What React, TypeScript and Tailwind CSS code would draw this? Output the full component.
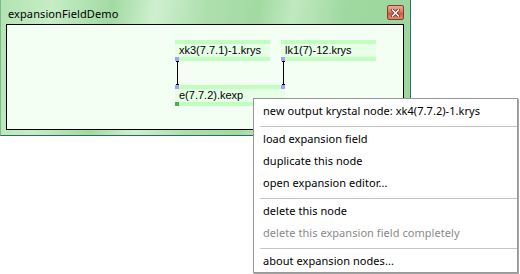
import React from "react";

const uiFont = { fontFamily: '"Noto Sans", "Open Sans", sans-serif' };
const nodeFont = { fontFamily: '"Liberation Sans", Arial, sans-serif' };

function Node({
  left,
  top,
  width,
  label,
  topHandles,
  bottomHandle,
}: {
  left: number;
  top: number;
  width: number;
  label: string;
  topHandles?: boolean;
  bottomHandle: "purple" | "green";
}) {
  return (
    <div className="absolute flex flex-col" style={{ left, top, width }}>
      <div className="relative h-[4px] bg-[#c0ffc0]">
        {topHandles && (
          <>
            <div className="absolute left-0 top-0 h-[4px] w-[4px] bg-[#a8a0f8]" />
            <div className="absolute right-0 top-0 h-[4px] w-[4px] bg-[#a8a0f8]" />
          </>
        )}
      </div>
      <div
        className="flex h-[13px] items-center bg-[#e6ffe6] pl-[4px] text-[11px] leading-[13px] text-black"
        style={nodeFont}
      >
        {label}
      </div>
      <div className="relative h-[4px] bg-[#c0ffc0]">
        <div
          className={
            bottomHandle === "purple"
              ? "absolute left-0 top-0 h-[4px] w-[4px] bg-[#a8a0f8]"
              : "absolute left-0 top-0 h-[4px] w-[4px] bg-[#4fae4f]"
          }
        />
      </div>
    </div>
  );
}

function MenuItem({ label, disabled }: { label: string; disabled?: boolean }) {
  return (
    <div
      className={
        disabled
          ? "flex h-[22px] items-center pl-[9px] text-[11px] tracking-[0.05px] text-[#8a8a8a]"
          : "flex h-[22px] items-center pl-[9px] text-[11px] tracking-[0.05px] text-black"
      }
    >
      {label}
    </div>
  );
}

function Separator() {
  return (
    <div className="flex h-[6px] flex-col pl-[6px] pt-[4px]">
      <div className="h-[1px] bg-[#c5c5c5]" />
    </div>
  );
}

export default function App() {
  return (
    <div className="relative h-[274px] w-[520px] overflow-hidden bg-white" style={uiFont}>
      {/* Window */}
      <div className="flex h-[136px] w-[411px] flex-col border-b border-l border-r border-b-[#2d6b5e] border-l-[#7fb88f] border-r-[#2f6f78] bg-[linear-gradient(100deg,#b2e3b2_0%,#c6edc6_12%,#a2daa2_26%,#cff0cf_36%,#addfad_48%,#a2daa2_60%,#c0e9c0_68%,#a0d9a0_80%,#9cd69c_100%)]">
        {/* Title bar */}
        <div className="flex h-[24px] items-center justify-between pl-[7px] pr-[6px]">
          <span className="pt-[2px] text-[11px] tracking-[0.1px] leading-none text-black">expansionFieldDemo</span>
          <div className="mt-[1px] flex h-[15px] w-[17px] items-center justify-center rounded-[2px] border border-[#8a3a30] bg-[linear-gradient(180deg,#f0a898_0%,#dc7a66_45%,#c95a44_55%,#e08a70_100%)]">
            <svg width="9" height="8" viewBox="0 0 9 8">
              <path d="M1.5 1 L7.5 7 M7.5 1 L1.5 7" stroke="#5a2a24" strokeWidth="3" strokeLinecap="square" />
              <path d="M1.5 1 L7.5 7 M7.5 1 L1.5 7" stroke="#ffffff" strokeWidth="1.5" strokeLinecap="square" />
            </svg>
          </div>
        </div>
        {/* Client area */}
        <div className="flex flex-1 pb-[5px] pl-[5px] pr-[6px]">
          <div className="relative flex-1 border border-black bg-[#f3fff3]">
            <svg className="absolute left-0 top-0" width="400" height="105">
              <line x1="170.5" y1="36" x2="170.5" y2="60" stroke="#000" strokeWidth="1" />
              <line x1="169" y1="36.5" x2="172" y2="36.5" stroke="#000" strokeWidth="1" />
              <line x1="169" y1="59.5" x2="172" y2="59.5" stroke="#000" strokeWidth="1" />
              <line x1="276.5" y1="36" x2="276.5" y2="60" stroke="#000" strokeWidth="1" />
              <line x1="275" y1="36.5" x2="278" y2="36.5" stroke="#000" strokeWidth="1" />
              <line x1="275" y1="59.5" x2="278" y2="59.5" stroke="#000" strokeWidth="1" />
            </svg>
            <Node left={168} top={15} width={95} label="xk3(7.7.1)-1.krys" bottomHandle="purple" />
            <Node left={274} top={15} width={95} label="lk1(7)-12.krys" bottomHandle="purple" />
            <Node left={168} top={60} width={110} label="e(7.7.2).kexp" topHandles bottomHandle="green" />
          </div>
        </div>
      </div>

      {/* Context menu */}
      <div className="absolute left-[253px] top-[98px] flex h-[175px] w-[265px] flex-col border border-[#979797] bg-white pt-[1px] shadow-[1px_1px_0_rgba(0,0,0,0.35)]">
        <MenuItem label="new output krystal node: xk4(7.7.2)-1.krys" />
        <Separator />
        <MenuItem label="load expansion field" />
        <MenuItem label="duplicate this node" />
        <MenuItem label="open expansion editor..." />
        <Separator />
        <MenuItem label="delete this node" />
        <MenuItem label="delete this expansion field completely" disabled />
        <Separator />
        <MenuItem label="about expansion nodes..." />
      </div>
    </div>
  );
}
